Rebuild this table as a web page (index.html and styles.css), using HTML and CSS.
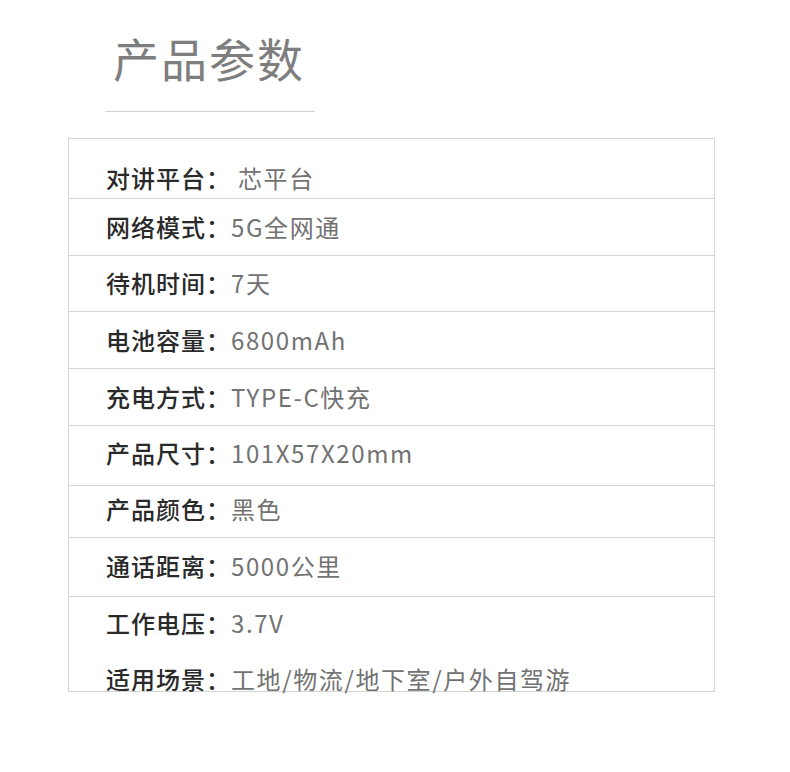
FILE: index.html
```html
<!DOCTYPE html>
<html lang="zh-CN">
<head>
<meta charset="utf-8">
<title>产品参数</title>
<link rel="stylesheet" href="styles.css">
</head>
<body>
<div class="page">
  <header class="head">
    <h1 class="title">产品参数</h1>
    <div class="rule"></div>
  </header>
  <section class="spec">
    <div class="row row-first"><span class="label">对讲平台：</span><span class="value"> 芯平台</span></div>
    <div class="row"><span class="label">网络模式：</span><span class="value">5G全网通</span></div>
    <div class="row"><span class="label">待机时间：</span><span class="value">7天</span></div>
    <div class="row"><span class="label">电池容量：</span><span class="value">6800mAh</span></div>
    <div class="row"><span class="label">充电方式：</span><span class="value">TYPE-C快充</span></div>
    <div class="row row-tall"><span class="label">产品尺寸：</span><span class="value">101X57X20mm</span></div>
    <div class="row row-short"><span class="label">产品颜色：</span><span class="value">黑色</span></div>
    <div class="row row-eight"><span class="label">通话距离：</span><span class="value">5000公里</span></div>
    <div class="row row-open"><span class="label">工作电压：</span><span class="value">3.7V</span></div>
    <div class="row row-last"><span class="label">适用场景：</span><span class="value">工地/物流/地下室/户外自驾游</span></div>
  </section>
</div>
</body>
</html>
```

FILE: styles.css
```css
* { box-sizing: border-box; }
html, body { margin: 0; padding: 0; background: #ffffff; }
body {
  font-family: "Noto Sans CJK SC", "Noto Sans", sans-serif;
}
.page {
  width: 790px;
  height: 772px;
  padding-top: 27px;
}
.head {
  margin-left: 105px;
  width: 210px;
}
.title {
  margin: 0;
  padding-left: 8px;
  font-size: 46px;
  line-height: 60px;
  font-weight: 400;
  letter-spacing: 2px;
  color: #7e7e7e;
  white-space: nowrap;
}
.rule {
  margin-top: 24px;
  height: 1px;
  background: #d2d2d2;
}
.spec {
  margin-top: 26px;
  margin-left: 68px;
  width: 647px;
  border: 1px solid #d4d4d4;
}
.row {
  display: flex;
  padding: 12.5px 0 13.2px 37px;
  border-bottom: 1px solid #d4d4d4;
  font-size: 24px;
  line-height: 30px;
  white-space: nowrap;
}
.row-first { padding-top: 24px; padding-bottom: 5px; }
.row-tall { padding-top: 12.7px; padding-bottom: 16.8px; }
.row-short { padding-top: 8.2px; padding-bottom: 12.5px; }
.row-eight { padding-top: 13.5px; padding-bottom: 15px; }
.row-open { padding-top: 11px; padding-bottom: 26px; border-bottom: 0; }
.row-last {
  padding-top: 0;
  padding-bottom: 0;
  height: 27px;
  border-bottom: 0;
}
.label {
  color: #2a2a2a;
  font-weight: 500;
  letter-spacing: 1px;
}
.value {
  color: #727272;
  font-weight: 400;
  letter-spacing: 1.6px;
  white-space: pre;
}
```
